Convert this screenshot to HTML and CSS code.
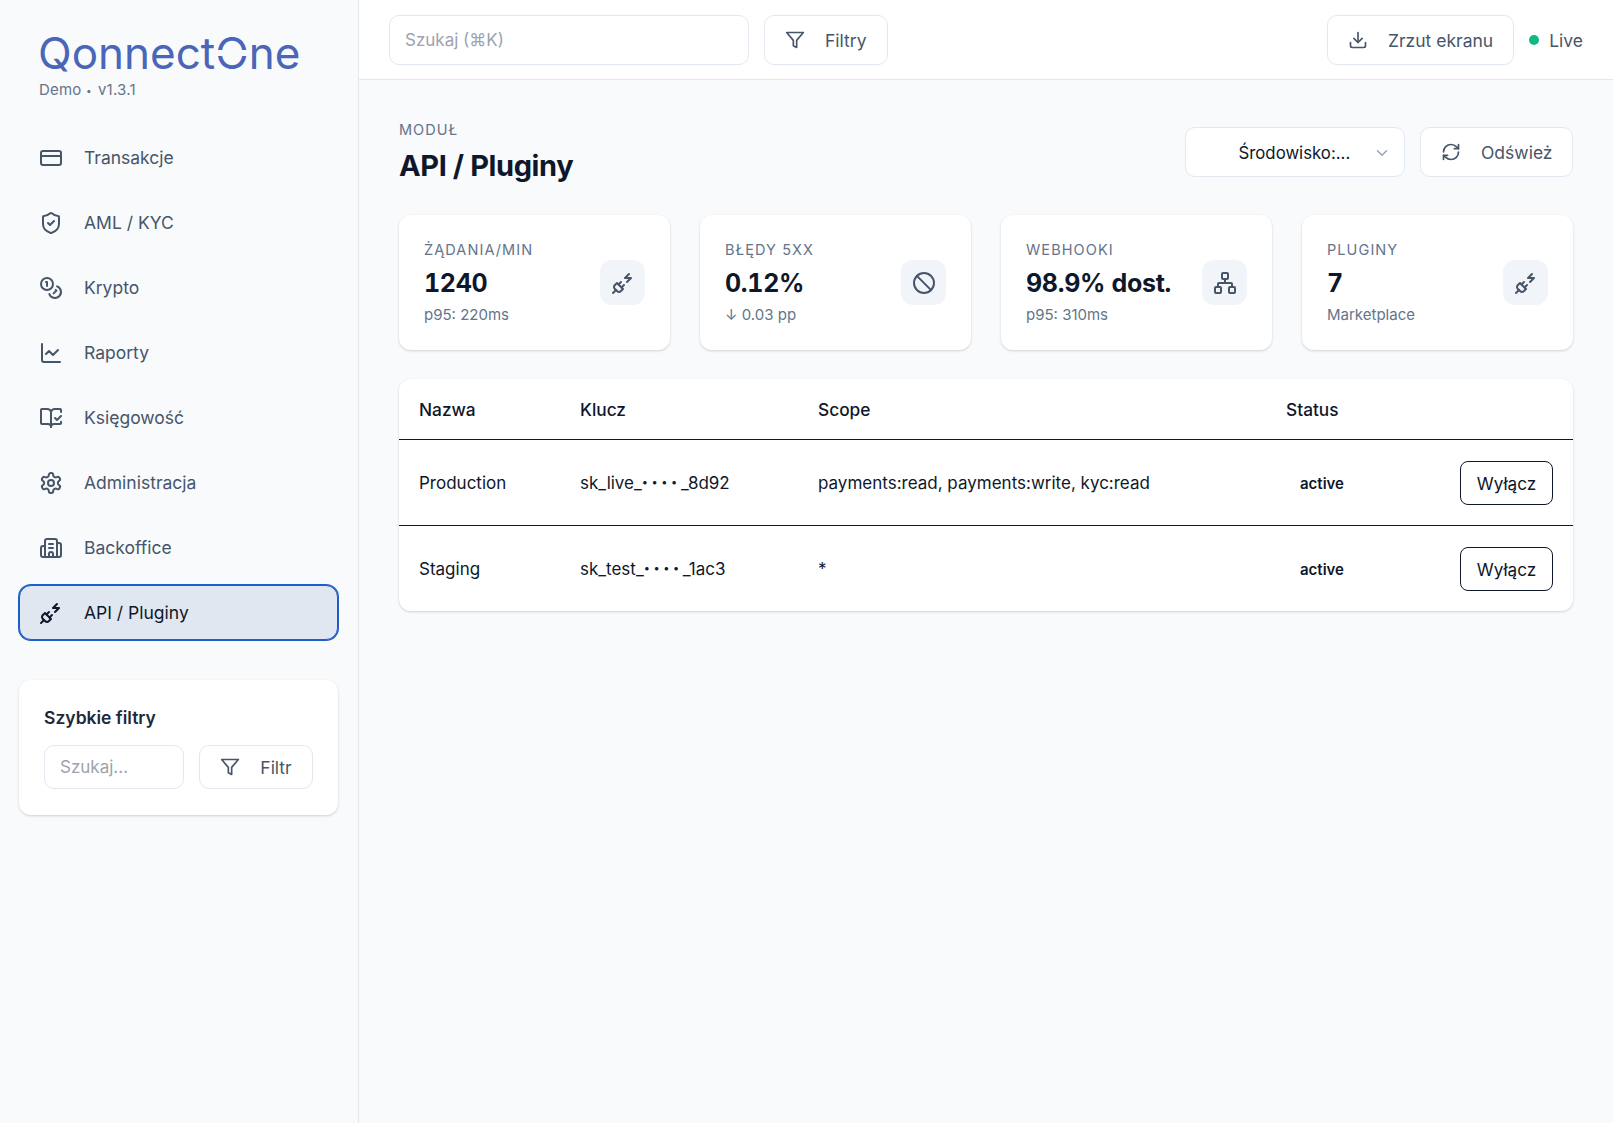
FILE: index.html
```html
<!DOCTYPE html>
<html lang="pl">
<head>
  <meta charset="UTF-8">
  <meta name="viewport" content="width=device-width, initial-scale=1.0">
  <title>QonnectOne - API / Pluginy</title>
  <link rel="stylesheet" href="styles.css">
</head>
<body>

  <svg class="sprite" width="0" height="0">
    <symbol id="i-card" viewBox="0 0 24 24"><rect x="2" y="5" width="20" height="14" rx="2"/><line x1="2" y1="10" x2="22" y2="10"/></symbol>
    <symbol id="i-shield" viewBox="0 0 24 24"><path d="M20 13c0 5-3.5 7.5-7.66 8.95a1 1 0 0 1-.67-.01C7.5 20.5 4 18 4 13V6a1 1 0 0 1 1-1c2 0 4.5-1.2 6.24-2.72a1.17 1.17 0 0 1 1.52 0C14.51 3.81 17 5 19 5a1 1 0 0 1 1 1z"/><path d="m9 12 2 2 4-4"/></symbol>
    <symbol id="i-coins" viewBox="0 0 24 24"><circle cx="8" cy="8" r="6"/><path d="M18.09 10.37A6 6 0 1 1 10.34 18"/><path d="M7 6h1v4"/><path d="m16.71 13.88.7.71-2.82 2.82"/></symbol>
    <symbol id="i-chart" viewBox="0 0 24 24"><path d="M3 3v16a2 2 0 0 0 2 2h16"/><path d="m19 9-5 5-4-4-3 3"/></symbol>
    <symbol id="i-book" viewBox="0 0 24 24"><path d="M12 21V7"/><path d="m16 12 2 2 4-4"/><path d="M22 6V4a1 1 0 0 0-1-1h-5a4 4 0 0 0-4 3 4 4 0 0 0-4-3H3a1 1 0 0 0-1 1v13a1 1 0 0 0 1 1h6a3 3 0 0 1 3 3 3 3 0 0 1 3-3h6a1 1 0 0 0 1-1v-1.3"/></symbol>
    <symbol id="i-gear" viewBox="0 0 24 24"><path d="M12.22 2h-.44a2 2 0 0 0-2 2v.18a2 2 0 0 1-1 1.73l-.43.25a2 2 0 0 1-2 0l-.15-.08a2 2 0 0 0-2.73.73l-.22.38a2 2 0 0 0 .73 2.73l.15.1a2 2 0 0 1 1 1.72v.51a2 2 0 0 1-1 1.74l-.15.09a2 2 0 0 0-.73 2.73l.22.38a2 2 0 0 0 2.73.73l.15-.08a2 2 0 0 1 2 0l.43.25a2 2 0 0 1 1 1.73V20a2 2 0 0 0 2 2h.44a2 2 0 0 0 2-2v-.18a2 2 0 0 1 1-1.73l.43-.25a2 2 0 0 1 2 0l.15.08a2 2 0 0 0 2.73-.73l.22-.39a2 2 0 0 0-.73-2.73l-.15-.08a2 2 0 0 1-1-1.74v-.5a2 2 0 0 1 1-1.74l.15-.09a2 2 0 0 0 .73-2.73l-.22-.38a2 2 0 0 0-2.73-.73l-.15.08a2 2 0 0 1-2 0l-.43-.25a2 2 0 0 1-1-1.73V4a2 2 0 0 0-2-2z"/><circle cx="12" cy="12" r="3"/></symbol>
    <symbol id="i-building" viewBox="0 0 24 24"><path d="M10 12h4"/><path d="M10 8h4"/><path d="M14 21v-3a2 2 0 0 0-4 0v3"/><path d="M6 10H4a2 2 0 0 0-2 2v7a2 2 0 0 0 2 2h16a2 2 0 0 0 2-2V9a2 2 0 0 0-2-2h-2"/><path d="M6 21V5a2 2 0 0 1 2-2h8a2 2 0 0 1 2 2v16"/></symbol>
    <symbol id="i-plug" viewBox="0 0 24 24"><path d="M6.3 20.3a2.4 2.4 0 0 0 3.4 0L12 18l-6-6-2.3 2.3a2.4 2.4 0 0 0 0 3.4Z"/><path d="m2 22 3-3"/><path d="M7.5 13.5 10 11"/><path d="M10.5 16.5 13 14"/><path d="m18 3-4 4h6l-4 4"/></symbol>
    <symbol id="i-ban" viewBox="0 0 24 24"><circle cx="12" cy="12" r="10"/><path d="m4.9 4.9 14.2 14.2"/></symbol>
    <symbol id="i-network" viewBox="0 0 24 24"><rect x="16" y="16" width="6" height="6" rx="1"/><rect x="2" y="16" width="6" height="6" rx="1"/><rect x="9" y="2" width="6" height="6" rx="1"/><path d="M5 16v-3a1 1 0 0 1 1-1h12a1 1 0 0 1 1 1v3"/><path d="M12 12V8"/></symbol>
    <symbol id="i-filter" viewBox="0 0 24 24"><polygon points="22 3 2 3 10 12.46 10 19 14 21 14 12.46 22 3"/></symbol>
    <symbol id="i-download" viewBox="0 0 24 24"><path d="M21 15v4a2 2 0 0 1-2 2H5a2 2 0 0 1-2-2v-4"/><polyline points="7 10 12 15 17 10"/><line x1="12" y1="15" x2="12" y2="3"/></symbol>
    <symbol id="i-refresh" viewBox="0 0 24 24"><path d="M3 12a9 9 0 0 1 9-9 9.75 9.75 0 0 1 6.74 2.74L21 8"/><path d="M21 3v5h-5"/><path d="M21 12a9 9 0 0 1-9 9 9.75 9.75 0 0 1-6.74-2.74L3 16"/><path d="M8 16H3v5"/></symbol>
    <symbol id="i-chevron" viewBox="0 0 24 24"><path d="m6 9 6 6 6-6"/></symbol>
  </svg>

  <div class="app">
    <aside class="sidebar">
      <div class="brand">
        <div class="logo">Qonnect<span class="logo-o">O</span>ne</div>
        <div class="version">Demo <span class="dots">•</span> v1.3.1</div>
      </div>

      <nav class="nav">
        <a class="nav-item"><svg class="icon"><use href="#i-card"/></svg>Transakcje</a>
        <a class="nav-item"><svg class="icon"><use href="#i-shield"/></svg>AML / KYC</a>
        <a class="nav-item"><svg class="icon"><use href="#i-coins"/></svg>Krypto</a>
        <a class="nav-item"><svg class="icon"><use href="#i-chart"/></svg>Raporty</a>
        <a class="nav-item"><svg class="icon"><use href="#i-book"/></svg>Księgowość</a>
        <a class="nav-item"><svg class="icon"><use href="#i-gear"/></svg>Administracja</a>
        <a class="nav-item"><svg class="icon"><use href="#i-building"/></svg>Backoffice</a>
        <a class="nav-item active"><svg class="icon"><use href="#i-plug"/></svg>API / Pluginy</a>
      </nav>

      <div class="quick card">
        <div class="quick-title">Szybkie filtry</div>
        <div class="quick-row">
          <input class="field quick-field" type="text" placeholder="Szukaj...">
          <button class="btn quick-btn"><svg class="icon"><use href="#i-filter"/></svg>Filtr</button>
        </div>
      </div>
    </aside>

    <div class="content">
      <header class="topbar">
        <input class="field search" type="text" placeholder="Szukaj (⌘K)">
        <button class="btn"><svg class="icon"><use href="#i-filter"/></svg>Filtry</button>
        <div class="topbar-right">
          <button class="btn"><svg class="icon"><use href="#i-download"/></svg>Zrzut ekranu</button>
          <span class="live"><span class="dot"></span>Live</span>
        </div>
      </header>

      <main class="main">
        <div class="page-head">
          <div>
            <div class="eyebrow">MODUŁ</div>
            <h1>API / Pluginy</h1>
          </div>
          <div class="page-actions">
            <div class="select">Środowisko:...<svg class="icon chevron"><use href="#i-chevron"/></svg></div>
            <button class="btn"><svg class="icon"><use href="#i-refresh"/></svg>Odśwież</button>
          </div>
        </div>

        <section class="stats">
          <div class="stat card">
            <div>
              <div class="stat-label">ŻĄDANIA/MIN</div>
              <div class="stat-value">1240</div>
              <div class="stat-sub">p95: 220ms</div>
            </div>
            <div class="tile"><svg class="icon"><use href="#i-plug"/></svg></div>
          </div>
          <div class="stat card">
            <div>
              <div class="stat-label">BŁĘDY 5XX</div>
              <div class="stat-value">0.12%</div>
              <div class="stat-sub">↓ 0.03 pp</div>
            </div>
            <div class="tile"><svg class="icon"><use href="#i-ban"/></svg></div>
          </div>
          <div class="stat card">
            <div>
              <div class="stat-label">WEBHOOKI</div>
              <div class="stat-value">98.9% dost.</div>
              <div class="stat-sub">p95: 310ms</div>
            </div>
            <div class="tile"><svg class="icon"><use href="#i-network"/></svg></div>
          </div>
          <div class="stat card">
            <div>
              <div class="stat-label">PLUGINY</div>
              <div class="stat-value">7</div>
              <div class="stat-sub">Marketplace</div>
            </div>
            <div class="tile"><svg class="icon"><use href="#i-plug"/></svg></div>
          </div>
        </section>

        <section class="card table-card">
          <table>
            <thead>
              <tr>
                <th class="col-name">Nazwa</th>
                <th class="col-key">Klucz</th>
                <th class="col-scope">Scope</th>
                <th class="col-status">Status</th>
                <th></th>
              </tr>
            </thead>
            <tbody>
              <tr>
                <td>Production</td>
                <td>sk_live_<span class="dots">••••</span>_8d92</td>
                <td>payments:read, payments:write, kyc:read</td>
                <td><span class="badge">active</span></td>
                <td class="cell-action"><button class="btn-outline">Wyłącz</button></td>
              </tr>
              <tr>
                <td>Staging</td>
                <td>sk_test_<span class="dots">••••</span>_1ac3</td>
                <td>*</td>
                <td><span class="badge">active</span></td>
                <td class="cell-action"><button class="btn-outline">Wyłącz</button></td>
              </tr>
            </tbody>
          </table>
        </section>
      </main>
    </div>
  </div>

</body>
</html>
```

FILE: styles.css
```css
* {
  box-sizing: border-box;
}
body {
  margin: 0;
  font-family: Inter, "Noto Sans", sans-serif;
  font-size: 17.5px;
  color: #0f172a;
  background-color: #f8fafc;
}
.sprite {
  position: absolute;
}
.icon {
  width: 24px;
  height: 24px;
  flex: none;
  fill: none;
  stroke: currentColor;
  stroke-width: 2;
  stroke-linecap: round;
  stroke-linejoin: round;
}
.dots {
  font-size: 11px;
  letter-spacing: 3.6px;
  vertical-align: 3px;
}

/* the app */
.app {
  display: flex;
  min-height: 1123px;
}

/* sidebar */
.sidebar {
  width: 359px;
  flex: none;
  padding: 36px 20px 0 19px;
  border-right: 1px solid #e2e8f0;
}
.brand {
  padding-left: 20px;
}
.logo {
  margin-left: -1px;
  font-size: 44px;
  line-height: 35px;
  color: #4a66b8;
}
.logo-o {
  position: relative;
}
.logo-o::after {
  content: "";
  position: absolute;
  left: -1px;
  right: -1px;
  top: 24px;
  height: 6px;
  background-color: #f8fafc;
}
.version {
  margin-top: 9px;
  font-size: 15px;
  line-height: 20px;
  letter-spacing: 0.2px;
  color: #64748b;
}
.version .dots {
  font-size: 10px;
  letter-spacing: 2px;
  vertical-align: 1px;
}
.nav {
  display: flex;
  flex-direction: column;
  gap: 10px;
  margin-top: 30px;
}
.nav-item {
  display: flex;
  align-items: center;
  gap: 21px;
  height: 55px;
  padding-left: 19px;
  border: 1px solid transparent;
  border-radius: 12px;
  color: #475569;
}
.nav-item.active {
  color: #0f172a;
  background-color: #e1e7f1;
  border-color: #1d5fc9;
  box-shadow: 0 0 0 1px #1d5fc9;
}
.card {
  background-color: #ffffff;
  border-radius: 12px;
  box-shadow: 0 1px 3px rgba(15, 23, 42, 0.12), 0 1px 2px rgba(15, 23, 42, 0.06);
}
.quick {
  margin-top: 40px;
  padding: 25px;
  height: 135px;
}
.quick-title {
  font-weight: 600;
  line-height: 26px;
  color: #1e293b;
}
.quick-row {
  display: flex;
  gap: 15px;
  margin-top: 14px;
}
.field {
  height: 50px;
  padding: 0 15px;
  font: inherit;
  font-size: 17px;
  color: #0f172a;
  background-color: #ffffff;
  border: 1px solid #e2e8f0;
  border-radius: 10px;
  outline: none;
}
.field::placeholder {
  color: #9ca3af;
}
.quick-field {
  width: 140px;
  height: 44px;
}
.btn {
  display: inline-flex;
  align-items: center;
  justify-content: center;
  gap: 20px;
  height: 50px;
  padding: 0 20px;
  font: inherit;
  color: #475569;
  background-color: #ffffff;
  border: 1px solid #e2e8f0;
  border-radius: 10px;
}
.btn .icon {
  width: 20px;
  height: 20px;
}
.quick-btn {
  width: 114px;
  height: 44px;
}

/* topbar */
.content {
  flex: 1;
  min-width: 0;
}
.topbar {
  display: flex;
  align-items: center;
  gap: 15px;
  height: 80px;
  padding: 0 30px;
  background-color: #ffffff;
  border-bottom: 1px solid #e2e8f0;
}
.topbar .field,
.topbar .btn {
  padding-top: 1px;
}
.search {
  width: 360px;
}
.topbar-right {
  display: flex;
  align-items: center;
  gap: 15px;
  margin-left: auto;
}
.live {
  display: flex;
  align-items: center;
  gap: 10px;
  padding-top: 1px;
  color: #475569;
}
.dot {
  width: 10px;
  height: 10px;
  border-radius: 50%;
  background-color: #10b981;
}

/* page */
.main {
  padding: 40px 40px 0;
}
.page-head {
  display: flex;
  justify-content: space-between;
  align-items: flex-start;
}
.eyebrow {
  font-size: 14.5px;
  line-height: 20px;
  letter-spacing: 1px;
  color: #64748b;
}
h1 {
  margin: 8px 0 0;
  font-size: 29px;
  line-height: 36px;
  font-weight: 700;
  letter-spacing: -0.4px;
}
.page-actions {
  display: flex;
  gap: 15px;
  margin-top: 7px;
}
.page-actions .btn {
  padding: 0 19.5px;
}
.select {
  display: flex;
  align-items: center;
  justify-content: space-between;
  width: 220px;
  height: 50px;
  padding: 1px 13px 0 52px;
  font-size: 16.8px;
  background-color: #ffffff;
  border: 1px solid #e2e8f0;
  border-radius: 10px;
}
.chevron {
  width: 18px;
  height: 18px;
  color: #94a3b8;
}
.stats {
  display: grid;
  grid-template-columns: repeat(4, 1fr);
  gap: 30px;
  margin-top: 31px;
}
.stat {
  display: flex;
  align-items: center;
  justify-content: space-between;
  height: 135px;
  padding: 0 25px;
}
.stat-label {
  font-size: 14.5px;
  line-height: 20px;
  letter-spacing: 1.08px;
  color: #64748b;
}
.stat-value {
  margin-top: 7px;
  font-size: 25px;
  line-height: 33px;
  font-weight: 700;
  letter-spacing: -0.3px;
  font-variant-numeric: tabular-nums;
}
.stat-sub {
  margin-top: 5px;
  font-size: 15px;
  line-height: 20px;
  color: #64748b;
}
.tile {
  display: flex;
  align-items: center;
  justify-content: center;
  width: 45px;
  height: 45px;
  border-radius: 12px;
  color: #475569;
  background-color: #f1f5f9;
}

/* table */
.table-card {
  margin-top: 29px;
  overflow: hidden;
  font-size: 17px;
}
table {
  width: 100%;
  border-collapse: collapse;
  table-layout: fixed;
}
th {
  height: 60px;
  padding: 2px 20px 0;
  text-align: left;
  font-size: 17.3px;
  font-weight: 500;
  border-bottom: 1px solid #0f172a;
}
td {
  height: 86px;
  padding: 2px 20px 0;
}
tbody tr:first-child td {
  border-bottom: 1px solid #0f172a;
}
.col-name {
  width: 161px;
}
.col-key {
  width: 238px;
}
.col-scope {
  width: 468px;
}
.col-status {
  width: 150px;
}
.badge {
  display: inline-block;
  padding: 0 14px;
  font-size: 15px;
  font-weight: 600;
}
.cell-action {
  text-align: right;
}
.btn-outline {
  width: 93px;
  height: 44px;
  padding: 0;
  font: inherit;
  font-size: 17.2px;
  color: #0f172a;
  background-color: #ffffff;
  border: 1px solid #0f172a;
  border-radius: 8px;
}
```
